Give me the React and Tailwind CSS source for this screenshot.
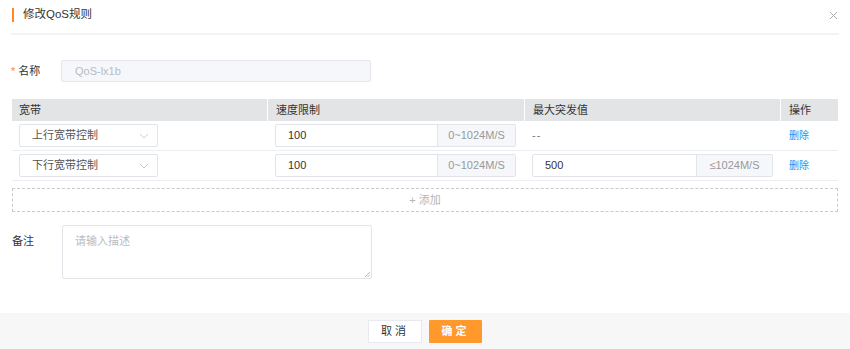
import React from 'react';

const font = { fontFamily: '"Liberation Sans", "Noto Sans CJK SC", sans-serif' };

const Chevron = () => (
  <svg width="10" height="6" viewBox="0 0 10 6" fill="none">
    <path d="M1 1l4 4 4-4" stroke="#c8ccd2" strokeWidth="1" />
  </svg>
);

const BandSelect = ({ value }) => (
  <div className="w-[139px] h-[23px] border border-[#e1e4e8] rounded-[2px] flex items-center justify-between pl-[12px] pr-[8px] text-[11px] text-[#555]">
    <span>{value}</span>
    <Chevron />
  </div>
);

const InputGroup = ({ value, addon, addonW }) => (
  <div className="w-[241px] h-[23px] flex border border-[#e1e4e8] rounded-[2px] text-[11px]">
    <div className="flex-1 flex items-center pl-[12px] text-[#333]">{value}</div>
    <div className={`${addonW} flex items-center justify-center bg-[#f5f7fa] border-l border-[#e1e4e8] text-[#999]`}>{addon}</div>
  </div>
);

const rows = [
  { band: '上行宽带控制', speed: '100', burst: null },
  { band: '下行宽带控制', speed: '100', burst: '500' },
];

export default function App() {
  return (
    <div className="w-[850px] h-[349px] bg-white flex flex-col" style={font}>
      <div className="px-[11px]">
        <div className="h-[35px] flex items-center border-b-2 border-[#f2f3f5] relative">
          <div className="w-[2px] h-[14px] bg-[#ff8a1f] ml-[1px] -mt-[3px]" />
          <span className="ml-[9px] -mt-[3px] text-[11.5px] text-[#333]">修改QoS规则</span>
          <svg className="absolute right-[1px] top-[11px]" width="9" height="9" viewBox="0 0 9 9">
            <path d="M1 1l7 7M8 1L1 8" stroke="#aaa" strokeWidth="1" />
          </svg>
        </div>
      </div>

      <div className="flex-1 px-[12px]">
        <div className="flex items-center mt-[25px] h-[22px]">
          <div className="w-[50px] text-[11px] text-[#333] -ml-[1px]">
            <span className="text-[#ff8a1f] mr-[3px]">*</span>名称
          </div>
          <div className="w-[310px] h-[22px] bg-[#f5f7fa] border border-[#e4e7ed] rounded-[2px] flex items-center pl-[13px] text-[11px] text-[#b8bcc2]">
            QoS-lx1b
          </div>
        </div>

        <div className="mt-[17px]">
          <div className="grid grid-cols-[255px_257px_256px_58px] h-[22px] bg-[#e2e4e6] text-[11px] text-[#333]">
            <div className="flex items-center pl-[7px]">宽带</div>
            <div className="flex items-center pl-[8px] border-l border-white">速度限制</div>
            <div className="flex items-center pl-[8px] border-l border-white">最大突发值</div>
            <div className="flex items-center pl-[8px] border-l border-white">操作</div>
          </div>
          {rows.map((r, i) => (
            <div key={i} className="grid grid-cols-[255px_257px_256px_58px] h-[30px] border-b border-[#eceef1] items-center text-[11px]">
              <div className="pl-[7px]"><BandSelect value={r.band} /></div>
              <div className="pl-[8px]"><InputGroup value={r.speed} addon="0~1024M/S" addonW="w-[78px]" /></div>
              <div className="pl-[8px]">
                {r.burst ? (
                  <InputGroup value={r.burst} addon="≤1024M/S" addonW="w-[76px]" />
                ) : (
                  <span className="text-[#777] tracking-[1px]">--</span>
                )}
              </div>
              <div className="pl-[9px] text-[10px] text-[#2d8cf0]">删除</div>
            </div>
          ))}
          <div className="mt-[7px] h-[24px] border border-dashed border-[#c9c9c9] flex items-center justify-center text-[11px] text-[#b5b5b5]">
            + 添加
          </div>
        </div>

        <div className="flex mt-[13px]">
          <div className="w-[50px] text-[11px] text-[#333] pt-[8px]">备注</div>
          <div className="w-[310px] h-[54px] border border-[#e1e4e8] rounded-[2px] relative pl-[12px] pt-[7px] text-[11px] text-[#b8bcc2]">
            请输入描述
            <svg className="absolute right-[1px] bottom-[1px]" width="5" height="5" viewBox="0 0 5 5">
              <path d="M0 5L5 0M2.5 5L5 2.5" stroke="#999" strokeWidth="0.7" />
            </svg>
          </div>
        </div>
      </div>

      <div className="h-[36px] bg-[#f7f7f7] flex items-center justify-center gap-[7px]">
        <button className="w-[54px] h-[23px] bg-white border border-[#e8eaf0] text-[11px] text-[#333] tracking-[3px]">取消</button>
        <button className="w-[53px] h-[23px] bg-[#ff992b] rounded-[1px] text-[11px] text-white font-bold tracking-[3px]">确定</button>
      </div>
    </div>
  );
}
